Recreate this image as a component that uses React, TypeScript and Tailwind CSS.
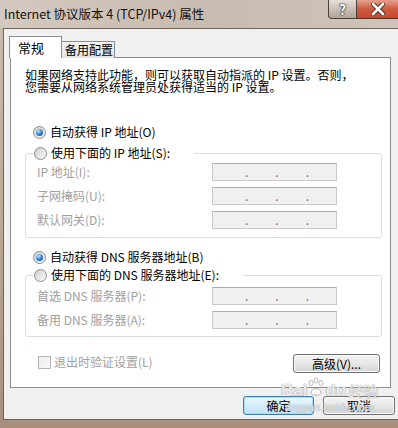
import React from "react";

// Win7 style radio button
function Radio({ checked }: { checked?: boolean }) {
  return (
    <span className="w-[13px] h-[13px] shrink-0 rounded-full border border-[#8b8c8e] bg-gradient-to-br from-[#cfcfcf] to-[#fbfbfb] flex items-center justify-center">
      {checked && (
        <span className="w-[7px] h-[7px] rounded-full bg-[radial-gradient(circle_at_35%_30%,#bfe6ff,#2a7ad0_55%,#10408a)]" />
      )}
    </span>
  );
}

// disabled ip box with the three dots
function IpBox() {
  return (
    <div className="w-[125px] h-[18px] border border-[#c9c9c9] border-t-[#adadad] bg-[#f0f0f0] flex items-end pb-[3px] pl-[32px] text-[#6d6d6d] leading-[10px]">
      <span className="w-[31px]">.</span>
      <span className="w-[31px]">.</span>
      <span className="w-[31px]">.</span>
    </div>
  );
}

function Row({ label }: { label: string }) {
  return (
    <div className="flex items-center h-[18px]">
      <span className="w-[175px] text-[#a0a0a0]">{label}</span>
      <IpBox />
    </div>
  );
}

function Button({ label, primary }: { label: string; primary?: boolean }) {
  return (
    <button
      className={
        primary
          ? "h-[19px] w-[71px] rounded-[3px] border border-[#3c7fb1] bg-gradient-to-b from-[#eaf6fd] to-[#bfe3f7] shadow-[inset_0_0_0_1px_#a8dcf6] leading-none"
          : "h-[19px] w-[72px] rounded-[3px] border border-[#707070] bg-gradient-to-b from-[#f4f4f4] via-[#e7e7e7] to-[#d4d4d4] shadow-[inset_0_0_0_1px_#fcfcfc] leading-none"
      }
    >
      {label}
    </button>
  );
}

export default function App() {
  return (
    <div className="relative w-[398px] h-[428px] overflow-hidden flex flex-col bg-gradient-to-b from-[#cbbdb1] via-[#bca997] to-[#a88f7c] text-[12px] text-black font-['Noto_Sans_CJK_SC',sans-serif]">
      {/* title bar */}
      <div className="h-[28px] shrink-0 flex items-start bg-gradient-to-r from-[#d4c9c0] via-[#c8bbaf] to-[#cfc4ba]">
        <span className="pl-[4px] pt-[5px] text-[12.5px] leading-[18px] text-[#111]">
          Internet 协议版本 4 (TCP/IPv4) 属性
        </span>
        <div className="ml-auto mr-[-2px] flex h-[19px]">
          <div className="w-[29px] h-full border border-t-0 border-[#4d4038] rounded-bl-[4px] bg-gradient-to-b from-[#e6e0da] via-[#c9bfb6] to-[#b1a498] flex items-center justify-center font-bold text-[14px] text-white [text-shadow:0_0_1px_#222,0_0_1px_#222,0_0_2px_#333]">
            ?
          </div>
          <div className="w-[43px] h-full border border-t-0 border-l-0 border-[#4d3028] bg-gradient-to-b from-[#e6a08d] via-[#cf5a40] to-[#c8472c] flex items-center justify-center">
            <svg width="14" height="12" viewBox="0 0 14 12">
              <path d="M2 1 L12 11 M12 1 L2 11" stroke="#3a2a2a" strokeWidth="4.5" strokeLinecap="round" />
              <path d="M2 1 L12 11 M12 1 L2 11" stroke="#ffffff" strokeWidth="2.6" strokeLinecap="round" />
            </svg>
          </div>
        </div>
      </div>

      {/* client area */}
      <div className="flex-1 ml-[3px] mb-[8px] flex flex-col bg-[#f0f0f0] border-l border-t border-b border-[#6f6258]">
        {/* tabs */}
        <div className="relative z-10 flex items-end mt-[7px] ml-[5px] h-[22px] -mb-px">
          <div className="h-[22px] w-[53px] border border-b-0 border-[#898c95] bg-white pl-[8px] pt-[3px] text-[13px] leading-[16px]">
            常规
          </div>
          <div className="h-[17px] w-[53px] border border-l-0 border-b-0 border-[#898c95] bg-gradient-to-b from-[#f3f3f3] to-[#e2e2e2] pl-[3px] leading-[16px]">
            备用配置
          </div>
        </div>

        {/* panel */}
        <div className="ml-[6px] w-[381px] h-[331px] border border-[#898c95] bg-white flex flex-col">
          <p className="pt-[11px] pl-[14px] leading-[12px]">
            如果网络支持此功能，则可以获取自动指派的 IP 设置。否则，
            <br />
            您需要从网络系统管理员处获得适当的 IP 设置。
          </p>

          <div className="mt-[32px] ml-[22px] flex items-center gap-[4px] h-[14px]">
            <Radio checked />
            <span>自动获得 IP 地址(O)</span>
          </div>

          <fieldset className="mt-[7px] ml-[14px] w-[357px] rounded-[3px] border border-[#d5dfe5] pl-[11px] pt-[3px] pb-[8px] flex flex-col gap-[6px]">
            <legend className="-ml-[3px] pr-[24px] h-[14px] flex items-center gap-[4px]">
              <Radio />
              <span>使用下面的 IP 地址(S):</span>
            </legend>
            <Row label="IP 地址(I):" />
            <Row label="子网掩码(U):" />
            <Row label="默认网关(D):" />
          </fieldset>

          <div className="mt-[12px] ml-[22px] flex items-center gap-[4px] h-[14px]">
            <Radio checked />
            <span>自动获得 DNS 服务器地址(B)</span>
          </div>

          <fieldset className="mt-[4px] ml-[14px] w-[357px] rounded-[3px] border border-[#d5dfe5] pl-[11px] pt-[5px] pb-[7px] flex flex-col gap-[6px]">
            <legend className="-ml-[3px] pr-[24px] h-[14px] flex items-center gap-[4px]">
              <Radio />
              <span>使用下面的 DNS 服务器地址(E):</span>
            </legend>
            <Row label="首选 DNS 服务器(P):" />
            <Row label="备用 DNS 服务器(A):" />
          </fieldset>

          <div className="mt-[17px] ml-[27px] mr-[10px] flex items-center">
            <span className="-mt-[3px] w-[13px] h-[13px] border border-[#b5b5b5] bg-gradient-to-br from-[#ececec] to-[#fafafa]" />
            <span className="-mt-[3px] ml-[3px] text-[#a0a0a0]">退出时验证设置(L)</span>
            <button className="ml-auto h-[19px] w-[87px] rounded-[3px] border border-[#707070] bg-gradient-to-b from-[#f4f4f4] via-[#e7e7e7] to-[#d4d4d4] shadow-[inset_0_0_0_1px_#fcfcfc] leading-none">
              高级(V)...
            </button>
          </div>
        </div>

        {/* dialog buttons */}
        <div className="mt-[8px] ml-[239px] flex gap-[9px]">
          <Button label="确定" primary />
          <Button label="取消" />
        </div>
      </div>

      {/* baidu watermark */}
      <div className="absolute left-[281px] top-[376px] flex flex-col items-center pointer-events-none text-white/80 [text-shadow:0_0_1px_#9a9a9a,0_0_1px_#9a9a9a]">
        <div className="flex items-end h-[24px]">
          <span className="text-[17px] font-bold leading-[18px] font-['Liberation_Sans',sans-serif]">Bai</span>
          <svg width="18" height="20" viewBox="0 0 18 20" className="mb-[3px] opacity-80">
            <g fill="#ffffff" stroke="#a8a8a8" strokeWidth="1">
              <ellipse cx="4" cy="6" rx="2" ry="2.6" />
              <ellipse cx="9" cy="3.5" rx="2" ry="2.6" />
              <ellipse cx="14" cy="6" rx="2" ry="2.6" />
              <path d="M4 16 C4 10 14 10 14 16 C14 19 4 19 4 16 Z" />
            </g>
          </svg>
          <span className="text-[17px] font-bold leading-[18px] font-['Liberation_Sans',sans-serif]">du</span>
          <span className="ml-[2px] text-[15px] leading-[18px]">经验</span>
        </div>
        <span className="text-[11px] leading-[14px] font-['Liberation_Sans',sans-serif]">jingyan.baidu.com</span>
      </div>
    </div>
  );
}
